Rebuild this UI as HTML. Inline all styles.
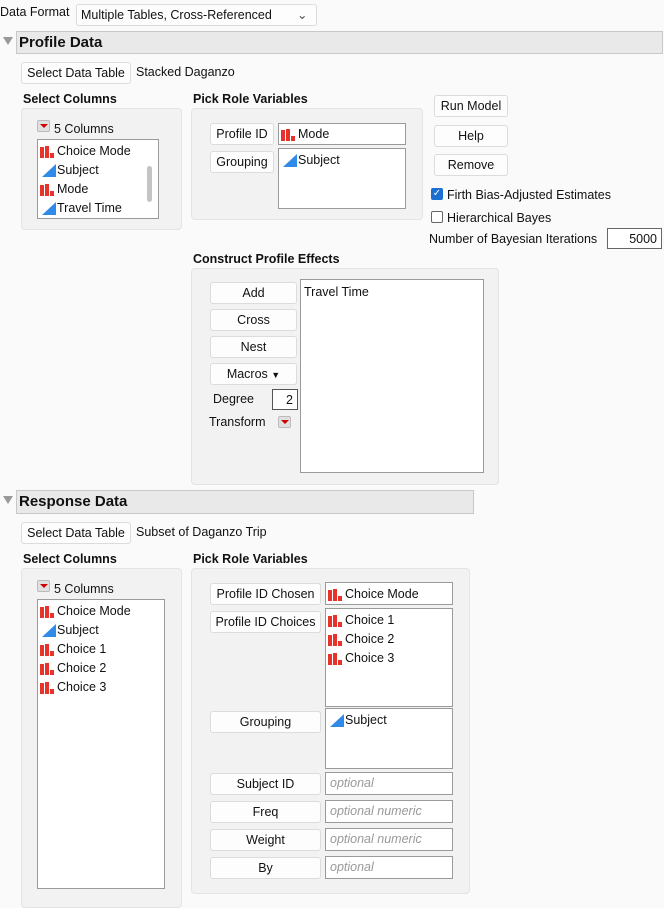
<!DOCTYPE html>
<html><head><meta charset="utf-8"><style>
body{margin:0;width:664px;height:896px;background:#fafafa;font-family:"Liberation Sans",sans-serif;font-size:12.5px;color:#111;position:relative;overflow:hidden}
.a{position:absolute;white-space:nowrap;margin-top:1px}
.btn{position:absolute;background:#fdfdfd;border:1px solid #dcdcdc;border-radius:3px;box-sizing:border-box;text-align:center;line-height:21px}
.panel{position:absolute;background:#f2f2f2;border:1px solid #e4e4e4;border-radius:4px;box-sizing:border-box}
.box{position:absolute;background:#fff;border:1px solid #9a9a9a;box-sizing:border-box}
.hdr{position:absolute;background:#e9e9e9;border:1px solid #c8c8c8;box-sizing:border-box;font-weight:bold;font-size:15px;line-height:22px;padding-left:2px}
.tri{position:absolute;width:0;height:0;border-left:5px solid transparent;border-right:5px solid transparent;border-top:8px solid #999}
.b{font-weight:bold}
.it{position:absolute;left:2px;height:19px;line-height:20px;padding-left:17px}
.nom i,.nom b,.nom s{position:absolute;display:block;bottom:2px;width:4px;background:#e8322c}
.nom i{left:0px;height:11px}
.nom b{left:5px;height:12px}
.nom s{left:10px;height:5px}
.con::before{content:"";position:absolute;left:2px;top:4px;border-left:14px solid transparent;border-bottom:13px solid #2f8ae8}
.red{position:absolute;width:13px;height:12px;background:#e0e0e0;border:1px solid #bbb;border-radius:2px;box-sizing:border-box}
.red::after{content:"";position:absolute;left:2px;top:3px;border-left:4px solid transparent;border-right:4px solid transparent;border-top:4px solid #c00}
.opt{position:absolute;left:4px;top:3px;color:#999;font-style:italic}
</style></head><body>
<div class="a" style="left:0;top:4px">Data Format</div>
<div class="btn" style="left:76px;top:4px;width:241px;height:22px;text-align:left;padding-left:4px">Multiple Tables, Cross-Referenced<span style="position:absolute;left:220px;color:#555">⌄</span></div>

<div class="tri" style="left:3px;top:37px"></div>
<div class="hdr" style="left:16px;top:31px;width:647px;height:23px">Profile Data</div>
<div class="btn" style="left:21px;top:62px;width:110px;height:22px">Select Data Table</div>
<div class="a" style="left:136px;top:64px">Stacked Daganzo</div>

<div class="a b" style="left:23px;top:91px">Select Columns</div>
<div class="panel" style="left:21px;top:108px;width:161px;height:122px"></div>
<div class="red" style="left:37px;top:120px"></div>
<div class="a" style="left:54px;top:121px">5 Columns</div>
<div class="box" style="left:37px;top:139px;width:122px;height:80px">
<div class="it nom" style="top:1px"><i></i><b></b><s></s>Choice Mode</div>
<div class="it con" style="top:20px">Subject</div>
<div class="it nom" style="top:39px"><i></i><b></b><s></s>Mode</div>
<div class="it con" style="top:58px">Travel Time</div>
<div style="position:absolute;left:109px;top:26px;width:5px;height:36px;background:#c4c4c4;border-radius:3px"></div>
</div>

<div class="a b" style="left:193px;top:91px">Pick Role Variables</div>
<div class="panel" style="left:191px;top:108px;width:232px;height:112px"></div>
<div class="btn" style="left:210px;top:123px;width:64px;height:22px">Profile ID</div>
<div class="box" style="left:278px;top:123px;width:128px;height:22px"><div class="it nom" style="top:0"><i></i><b></b><s></s>Mode</div></div>
<div class="btn" style="left:210px;top:151px;width:64px;height:22px">Grouping</div>
<div class="box" style="left:278px;top:148px;width:128px;height:61px"><div class="it con" style="top:1px">Subject</div></div>

<div class="btn" style="left:434px;top:95px;width:74px;height:22px">Run Model</div>
<div class="btn" style="left:434px;top:125px;width:74px;height:22px">Help</div>
<div class="btn" style="left:434px;top:154px;width:74px;height:22px">Remove</div>
<div style="position:absolute;left:431px;top:188px;width:12px;height:12px;background:#1a6fd1;border-radius:2px;color:#fff;font-size:10px;line-height:12px;text-align:center">✓</div>
<div class="a" style="left:447px;top:187px">Firth Bias-Adjusted Estimates</div>
<div style="position:absolute;left:431px;top:211px;width:12px;height:12px;border:1px solid #666;border-radius:2px;box-sizing:border-box;background:#fff"></div>
<div class="a" style="left:447px;top:210px">Hierarchical Bayes</div>
<div class="a" style="left:429px;top:231px">Number of Bayesian Iterations</div>
<div class="box" style="left:607px;top:228px;width:55px;height:21px;text-align:right;padding-right:4px;line-height:20px;border-color:#666">5000</div>

<div class="a b" style="left:193px;top:251px">Construct Profile Effects</div>
<div class="panel" style="left:191px;top:268px;width:308px;height:217px"></div>
<div class="btn" style="left:210px;top:282px;width:87px;height:22px">Add</div>
<div class="btn" style="left:210px;top:309px;width:87px;height:22px">Cross</div>
<div class="btn" style="left:210px;top:336px;width:87px;height:22px">Nest</div>
<div class="btn" style="left:210px;top:363px;width:87px;height:22px">Macros <span style="font-size:9px">▼</span></div>
<div class="a" style="left:213px;top:391px">Degree</div>
<div class="box" style="left:272px;top:389px;width:26px;height:21px;text-align:right;padding-right:4px;line-height:20px;border-color:#555">2</div>
<div class="a" style="left:209px;top:414px">Transform</div>
<div class="red" style="left:278px;top:416px"></div>
<div class="box" style="left:300px;top:279px;width:184px;height:194px"><div class="a" style="left:3px;top:4px">Travel Time</div></div>

<div class="tri" style="left:3px;top:496px"></div>
<div class="hdr" style="left:16px;top:490px;width:458px;height:24px">Response Data</div>
<div class="btn" style="left:21px;top:522px;width:110px;height:22px">Select Data Table</div>
<div class="a" style="left:136px;top:524px">Subset of Daganzo Trip</div>

<div class="a b" style="left:23px;top:551px">Select Columns</div>
<div class="panel" style="left:21px;top:568px;width:161px;height:340px"></div>
<div class="red" style="left:37px;top:580px"></div>
<div class="a" style="left:54px;top:581px">5 Columns</div>
<div class="box" style="left:37px;top:599px;width:128px;height:290px">
<div class="it nom" style="top:1px"><i></i><b></b><s></s>Choice Mode</div>
<div class="it con" style="top:20px">Subject</div>
<div class="it nom" style="top:39px"><i></i><b></b><s></s>Choice 1</div>
<div class="it nom" style="top:58px"><i></i><b></b><s></s>Choice 2</div>
<div class="it nom" style="top:77px"><i></i><b></b><s></s>Choice 3</div>
</div>

<div class="a b" style="left:193px;top:551px">Pick Role Variables</div>
<div class="panel" style="left:191px;top:568px;width:279px;height:326px"></div>
<div class="btn" style="left:210px;top:583px;width:111px;height:22px">Profile ID Chosen</div>
<div class="box" style="left:325px;top:582px;width:128px;height:23px"><div class="it nom" style="top:1px"><i></i><b></b><s></s>Choice Mode</div></div>
<div class="btn" style="left:210px;top:611px;width:111px;height:22px">Profile ID Choices</div>
<div class="box" style="left:325px;top:608px;width:128px;height:99px">
<div class="it nom" style="top:1px"><i></i><b></b><s></s>Choice 1</div>
<div class="it nom" style="top:20px"><i></i><b></b><s></s>Choice 2</div>
<div class="it nom" style="top:39px"><i></i><b></b><s></s>Choice 3</div>
</div>
<div class="btn" style="left:210px;top:711px;width:111px;height:22px">Grouping</div>
<div class="box" style="left:325px;top:708px;width:128px;height:61px"><div class="it con" style="top:1px">Subject</div></div>
<div class="btn" style="left:210px;top:773px;width:111px;height:22px">Subject ID</div>
<div class="box" style="left:325px;top:772px;width:128px;height:23px"><div class="opt">optional</div></div>
<div class="btn" style="left:210px;top:801px;width:111px;height:22px">Freq</div>
<div class="box" style="left:325px;top:800px;width:128px;height:23px"><div class="opt">optional numeric</div></div>
<div class="btn" style="left:210px;top:829px;width:111px;height:22px">Weight</div>
<div class="box" style="left:325px;top:828px;width:128px;height:23px"><div class="opt">optional numeric</div></div>
<div class="btn" style="left:210px;top:857px;width:111px;height:22px">By</div>
<div class="box" style="left:325px;top:856px;width:128px;height:23px"><div class="opt">optional</div></div>
</body></html>
